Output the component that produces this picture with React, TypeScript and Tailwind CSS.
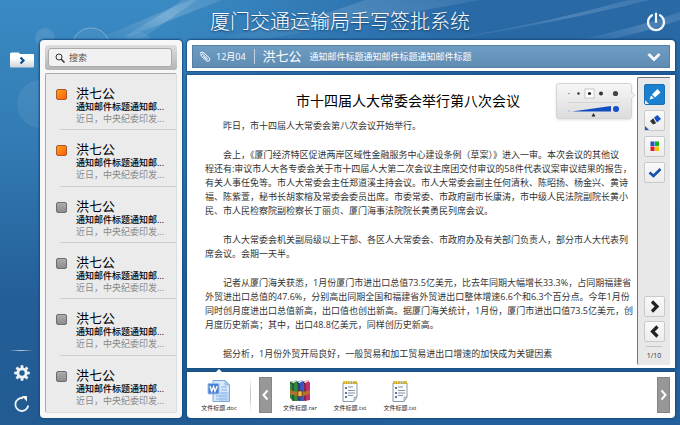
import { ReactNode } from "react";

const latin = "font-['Open_Sans','Noto_Sans_CJK_SC',sans-serif]";

const messages = [true, true, false, false, false, false];

const paragraphs: string[][] = [
  ["昨日，市十四届人大常委会第八次会议开始举行。"],
  [
    "会上，《厦门经济特区促进两岸区域性金融服务中心建设条例（草案）》进入一审。本次会议的其他议",
    "程还有:审议市人大各专委会关于市十四届人大第二次会议主席团交付审议的58件代表议案审议结果的报告，",
    "有关人事任免等。市人大常委会主任郑道溪主持会议。市人大常委会副主任何清秋、陈昭扬、杨金兴、黄诗",
    "福、陈紫萱，秘书长胡家榕及常委会委员出席。市委常委、市政府副市长康涛，市中级人民法院副院长黄小",
    "民、市人民检察院副检察长丁丽贞、厦门海事法院院长黄勇民列席会议。",
  ],
  [
    "市人大常委会机关副局级以上干部、各区人大常委会、市政府办及有关部门负责人，部分市人大代表列",
    "席会议。会期一天半。",
  ],
  [
    "记者从厦门海关获悉，1月份厦门市进出口总值73.5亿美元，比去年同期大幅增长33.3%，占同期福建省",
    "外贸进出口总值的47.6%，分别高出同期全国和福建省外贸进出口整体增速6.6个和6.3个百分点。今年1月份",
    "同时创月度进出口总值新高，出口值也创出新高。据厦门海关统计，1月份，厦门市进出口值73.5亿美元，创",
    "月度历史新高；其中，出口48.8亿美元，同样创历史新高。",
  ],
  ["据分析，1月份外贸开局良好，一般贸易和加工贸易进出口增速的加快成为关键因素"],
];

function Backdrop() {
  return (
    <svg className="absolute inset-0 h-full w-full" viewBox="0 0 680 425" preserveAspectRatio="none" aria-hidden="true">
      <defs>
        <linearGradient id="sky" x1="0" y1="0" x2="0" y2="1">
          <stop offset="0" stopColor="#3a8ac3" />
          <stop offset="0.35" stopColor="#327ab3" />
          <stop offset="0.7" stopColor="#235e97" />
          <stop offset="1" stopColor="#215b92" />
        </linearGradient>
        <linearGradient id="dusk" x1="0" y1="0" x2="1" y2="0">
          <stop offset="0.25" stopColor="#24619f" stopOpacity="0" />
          <stop offset="0.7" stopColor="#24619f" stopOpacity="0.8" />
        </linearGradient>
        <linearGradient id="ray" x1="0" y1="1" x2="1" y2="0">
          <stop offset="0" stopColor="#fff" stopOpacity="0.02" />
          <stop offset="0.6" stopColor="#fff" stopOpacity="0.17" />
          <stop offset="1" stopColor="#fff" stopOpacity="0.1" />
        </linearGradient>
      </defs>
      <rect width="680" height="425" fill="url(#sky)" />
      <rect width="680" height="425" fill="url(#dusk)" />
      <path d="M95 40 190 0H222L120 40Z" fill="url(#ray)" />
      <path d="M118 40 165 12 182 0H197L140 40Z" fill="url(#ray)" />
      <path d="M215 40 330 12 365 0H480L260 40Z" fill="url(#ray)" opacity="0.8" />
      <path d="M450 40Q560 22 650 0H628Q540 24 475 34Z" fill="url(#ray)" />
      <path d="M575 40Q630 30 680 12V20Q640 34 605 40Z" fill="url(#ray)" />
      <circle cx="45" cy="38" r="10" fill="#fff" opacity="0.1" />
      <circle cx="91" cy="47" r="19" fill="#fff" fillOpacity="0.05" stroke="#fff" strokeOpacity="0.3" />
      <circle cx="138" cy="48" r="16" fill="#fff" opacity="0.08" />
      <circle cx="41" cy="104" r="24" fill="#fff" opacity="0.07" />
    </svg>
  );
}

function Rail() {
  return (
    <nav className="flex w-10 shrink-0 flex-col items-start pt-3 pb-[5px] pl-[9px]">
      <button aria-label="展开文件夹" className="h-4 w-[26px]">
        <svg viewBox="0 0 26 16" className="h-4 w-[26px]">
          <defs>
            <linearGradient id="folder" x1="0" y1="0" x2="0" y2="1">
              <stop offset="0.4" stopColor="#fff" />
              <stop offset="1" stopColor="#cfd3d8" />
            </linearGradient>
          </defs>
          <path d="M1 2Q1 .5 2.500 .5H9Q10.500 .5 11 2H24Q25 2 25 3V14Q25 15.500 24 15.500H2Q1 15.500 1 14Z" fill="url(#folder)" />
          <path d="M11.500 5.500 14.500 8.500 11.500 11.500" fill="none" stroke="#0d5195" strokeWidth="2.200" />
        </svg>
      </button>
      <div className="mt-auto h-px w-6 bg-gradient-to-r from-transparent via-white/70 to-transparent" />
      <button aria-label="设置" className="mt-[13px] ml-1 size-[18px]">
        <svg viewBox="-9 -9 18 18" className="size-[18px]" fill="#eef2f6">
          {[0, 45, 90, 135].map((a) => (
            <path key={a} d="M-1.300-7.800H1.300L1.800 0 1.300 7.800H-1.300L-1.800 0Z" transform={`rotate(${a})`} />
          ))}
          <circle r="5.600" />
          <circle r="2.700" fill="#225c94" />
        </svg>
      </button>
      <button aria-label="刷新" className="mt-[13px] ml-1 size-[18px]">
        <svg viewBox="0 0 18 18" className="size-[18px]">
          <path d="M15.300 10.500A6.500 6.500 0 1 1 10 3.100" fill="none" stroke="#eef2f6" strokeWidth="1.800" />
          <path d="M8.500 1H14V6.500Z" fill="#eef2f6" />
        </svg>
      </button>
    </nav>
  );
}

function Inbox() {
  return (
    <section className="flex w-[142px] shrink-0 flex-col gap-[3px] rounded-[4px] bg-[#f7f7f7] p-[5px] shadow-[0_0_2px_1px_#164b80]">
      <label className="flex h-[25px] shrink-0 items-center rounded-[3px] bg-gradient-to-b from-[#dedede] to-[#b4b4b4] p-[3px] pr-[5px]">
        <span className="flex h-[19px] min-w-0 flex-1 items-center gap-1 rounded-[3px] border border-[#aaa] bg-[#f1f1f1] pl-[6px]">
          <svg viewBox="0 0 10 10" className="size-[10px] shrink-0" fill="none" stroke="#333">
            <circle cx="4" cy="4" r="3" />
            <path d="M6.200 6.200 9.500 9.500" strokeWidth="1.500" />
          </svg>
          <input
            type="search"
            aria-label="搜索"
            placeholder="搜索"
            className="w-full min-w-0 bg-transparent text-[9px] leading-[14px] outline-none placeholder:text-[#555]"
          />
        </span>
      </label>
      <ul className="flex min-h-0 flex-1 flex-col rounded-[2px] border border-t-[#aaa] border-r-[#ddd] border-b-[#ddd] border-l-[#aaa] bg-[#ebebeb]">
        {messages.map((unread, i) => (
          <li key={i} className="flex min-h-0 flex-1 flex-col justify-between">
            <div className="flex pt-3 pl-[10px]">
              <span
                className={
                  unread
                    ? "mt-[3px] size-[11px] shrink-0 rounded-[2px] border border-[#a65a2a] bg-gradient-to-br from-[#ffa01a] to-[#ff5a0a]"
                    : "mt-[3px] size-[11px] shrink-0 rounded-[2px] border border-[#6c6c6c] bg-gradient-to-b from-[#adadad] to-[#8c8c8c]"
                }
              />
              <a href="#message" className="ml-[9px] block whitespace-nowrap text-black">
                <span className="block text-[13px] leading-[15px]">洪七公</span>
                <span className="block text-[9px] leading-3 font-medium">通知邮件标题通知邮...</span>
                <span className="block text-[9px] leading-3 text-[#888]">近日，中央纪委印发...</span>
              </a>
            </div>
            {i < 5 && <span className="ml-[14px] h-px bg-[#cdcdcd]" />}
          </li>
        ))}
      </ul>
    </section>
  );
}

function MailHeader() {
  return (
    <header className="rounded-t-[4px] bg-white p-[5px] pb-[3px] shadow-[0_0_2px_1px_#164b80]">
      <div className="flex h-[23px] items-center border border-[#557fa5] bg-gradient-to-b from-[#6f9cc2] to-[#5f8cb3] pr-[8px] pl-[6px] text-white">
        <svg viewBox="0 0 12 12" className="size-3" fill="none" stroke="#fff" strokeLinecap="round">
          <path d="M8.800 8 4.200 3.600Q3.200 2.700 2.400 3.500 1.600 4.400 2.600 5.300L7.600 10Q9.200 11.300 10.600 10 11.900 8.500 10.400 7L5.400 2.300Q3.300.500 1.500 2.200" transform="translate(-.3 -.3)" />
          <path d="M4.500 5.400 8.200 8.800" />
        </svg>
        <time className="ml-[5px] text-[9px]">12月04</time>
        <span className="mx-2 h-[15px] w-px bg-white/60" />
        <span className="text-[13px]">洪七公</span>
        <span className="ml-2 text-[9px] whitespace-nowrap">通知邮件标题通知邮件标题通知邮件标题</span>
        <button aria-label="展开" className="ml-auto">
          <svg viewBox="0 0 14 10" className="h-[10px] w-[14px]">
            <path d="M1.500 2 7 7.500 12.500 2" fill="none" stroke="#f4f4f4" strokeWidth="3" />
          </svg>
        </button>
      </div>
    </header>
  );
}

function PenPopover() {
  return (
    <div className="absolute top-2 right-[43px] h-9 w-[76px] rounded-[3px] border border-[#d4d4d4] bg-gradient-to-b from-[#f6f6f6] to-[#dcdcdc] shadow-sm">
      <svg viewBox="0 0 78 34" className="absolute top-0 left-0 h-[34px] w-[78px]">
        <path d="M74 8 78 11 74 15" fill="#efefef" stroke="#ccc" strokeWidth=".7" />
        <rect x="28" y="5" width="9" height="9" fill="#fff" stroke="#bbb" strokeWidth=".8" />
        <circle cx="12" cy="9.500" r=".6" fill="#444" />
        <circle cx="21.500" cy="9.500" r="1.200" fill="#333" />
        <circle cx="32.500" cy="9.500" r="1.600" fill="#222" />
        <circle cx="44" cy="9.500" r="2" fill="#333" />
        <circle cx="58.500" cy="9.500" r="2.600" fill="#444" />
        <path d="M11 18.500H62" stroke="#ccc" strokeWidth=".7" />
        <circle cx="12" cy="27" r=".8" fill="#8fb5e8" />
        <path d="M15 27.500 54 22V27.500Z" fill="#124ec0" />
        <circle cx="59" cy="25" r="3" fill="#1550c8" />
        <path d="M36.500 29 38.500 32.500H34.500Z" fill="#222" />
      </svg>
      <input type="range" aria-label="笔画粗细" defaultValue={45} className="absolute bottom-0 left-[10px] h-4 w-[54px] opacity-0" />
    </div>
  );
}

function ToolButton({ label, active, children }: { label: string; active?: boolean; children: ReactNode }) {
  return (
    <button
      aria-label={label}
      className={
        active
          ? "size-[21px] rounded-[2px] border border-[#1d6fb4] bg-[#1b7fd0]"
          : "size-[21px] rounded-[2px] border border-[#cacaca] bg-gradient-to-b from-[#fafafa] to-[#ececec]"
      }
    >
      <svg viewBox="0 0 19 19" className="size-[19px]">
        {children}
      </svg>
    </button>
  );
}

function Toolbar() {
  return (
    <aside className="mt-[2px] mr-[5px] mb-[3px] flex w-[33px] shrink-0 flex-col items-center justify-between rounded-l-[2px] border-t border-l border-[#777] bg-[#e8e8e8] pt-[6px] pb-1">
      <div className="flex flex-col gap-[5px]">
        <ToolButton label="画笔" active>
          <path d="M0 15 4 19H0Z" fill="#e8e8e8" />
          <path d="M7 9.500 12.500 4 15.500 7.500 10 12.500Z" fill="#fff" />
          <path d="M6 10.500 9 13.200 4.500 14.500Z" fill="#fff" />
        </ToolButton>
        <ToolButton label="橡皮">
          <path d="M0 15 4 19H0Z" fill="#1255c4" />
          <path d="M9 6.500 12.500 4 16 8 12 11.500Z" fill="#1550c4" />
          <path d="M8.300 7.300 11.200 12.200 8 13.500 5 10Z" fill="#333" />
        </ToolButton>
        <ToolButton label="颜色">
          <rect x="5.500" y="4.500" width="4" height="4.500" fill="#1b56c8" />
          <rect x="10" y="4.500" width="4" height="4.500" fill="#18b018" />
          <rect x="5.500" y="9.500" width="4" height="4.500" fill="#e02020" />
          <rect x="10" y="9.500" width="4" height="4.500" fill="#f5c400" />
        </ToolButton>
        <ToolButton label="确认">
          <path d="M4.500 9.500 8.500 13 15.500 6" fill="none" stroke="#1552ac" strokeWidth="2.600" />
        </ToolButton>
      </div>
      <div className="flex flex-col items-center gap-1">
        <ToolButton label="下一页">
          <path d="M7 4.500 12 9.500 7 14.500" fill="none" stroke="#222" strokeWidth="3.200" />
        </ToolButton>
        <ToolButton label="上一页">
          <path d="M12.500 4.500 7.500 9.500 12.500 14.500" fill="none" stroke="#222" strokeWidth="3.200" />
        </ToolButton>
        <div className="h-px w-4 bg-[#c4c4c4]" />
        <span className="text-[7px] leading-[10px] text-[#333]">1/10</span>
      </div>
    </aside>
  );
}

function Article() {
  return (
    <div className="relative flex min-h-0 flex-1 bg-white shadow-[0_0_2px_1px_#164b80]">
      <article className="flex min-w-0 flex-1 flex-col gap-[15px] pt-4 pl-[18px] text-[9px] leading-[14px] whitespace-nowrap text-[#333]">
        <h2 className="-mb-[7px] pr-[26px] text-center text-[14px] leading-5 text-black">市十四届人大常委会举行第八次会议</h2>
        {paragraphs.map((lines) => (
          <p key={lines[0]} className="indent-[18px]">
            {lines.map((line, i) => (
              <span key={line}>
                {i > 0 && <br />}
                {line}
              </span>
            ))}
          </p>
        ))}
      </article>
      <Toolbar />
      <PenPopover />
    </div>
  );
}

function WordIcon() {
  return (
    <svg viewBox="0 0 24 24" className="size-6">
      <path d="M6 1.500H18L22.500 6V22.500H6Z" fill="#d7e8fa" stroke="#7da8d8" />
      <path d="M18 1.500V6H22.500Z" fill="#a9c8ec" stroke="#7da8d8" strokeWidth=".6" />
      <path d="M14 8H20M14 11H20M14 14H20M9 17H20M9 20H20" stroke="#86afe0" />
      <path d="M12 13H22V22H12Z" fill="#9cc2f0" opacity=".5" />
      <rect x="1" y="4.500" width="11" height="10.500" rx="1" fill="#4a7fd6" stroke="#9dbfec" />
      <path d="M3 7 4.700 12.300 6.600 7.800 8 12.300 10.300 7" fill="none" stroke="#fff" strokeWidth="1.400" />
    </svg>
  );
}

function RarIcon() {
  return (
    <svg viewBox="0 0 24 24" className="size-6">
      <path d="M2 3 8 1 10 3V22L5 22 2 19Z" fill="#2f8a3e" />
      <path d="M9 3 14 1 16 3V22H11L9 20Z" fill="#3b55b8" />
      <path d="M15 3 20 1 22 4V21L17 22 15 20Z" fill="#c0306e" />
      <path d="M2 3 5 5V22M9 3 11 5V22M15 3 17 5V22" fill="none" stroke="#222" strokeWidth=".9" />
      <path d="M3 3 8 1 9 2 5 4ZM10 3 14 1 15 2 11 4ZM16 3 20 1 21 2 17 4Z" fill="#eee" />
      <path d="M2 11Q12 15 22 11V15Q12 19 2 15Z" fill="#b5702c" />
      <rect x="10" y="12" width="4" height="5.500" fill="#e8c050" stroke="#6b4215" strokeWidth=".8" />
    </svg>
  );
}

function TextIcon() {
  return (
    <svg viewBox="0 0 24 24" className="size-6">
      <path d="M5 4H19V18L16 22.500H5Z" fill="#f8fafc" stroke="#8b98a8" />
      <path d="M19 18H16V22.500Z" fill="#c9d2dc" stroke="#8b98a8" strokeWidth=".6" />
      <path d="M6 2V5M8.500 2V5M11 2V5M13.500 2V5M16 2V5M18 2V5" stroke="#d4a80c" strokeWidth="1.500" />
      <path d="M7 9H9M7 14H9M7 18H9" stroke="#5c7894" strokeWidth="2" />
      <path d="M10 8H15M10 11.500H17M10 14H17M10 16.500H15" stroke="#8593a3" />
    </svg>
  );
}

function FileLink({ name, children }: { name: string; children: ReactNode }) {
  return (
    <a href="#file" className="flex w-[50px] shrink-0 flex-col items-center text-[6px] leading-[8px] whitespace-nowrap text-[#222]">
      {children}
      <span className="mt-px">{name}</span>
    </a>
  );
}

function PagerButton({ label, d }: { label: string; d: string }) {
  return (
    <button aria-label={label} className="flex h-9 w-[13px] shrink-0 items-center justify-center border border-[#858585] bg-[#979797]">
      <svg viewBox="0 0 9 12" className="h-3 w-[9px]">
        <path d={d} fill="none" stroke="#fff" strokeWidth="2" />
      </svg>
    </button>
  );
}

function Attachments() {
  return (
    <footer className="relative flex h-[46px] shrink-0 items-center rounded-b-[4px] bg-white pr-[5px] pl-[7px] shadow-[0_0_2px_1px_#164b80]">
      <svg viewBox="0 0 8 4" className="absolute -top-[3px] left-7 h-1 w-2">
        <path d="M0 4 4 0 8 4Z" fill="#fff" />
      </svg>
      <FileLink name="文件标题.doc">
        <WordIcon />
      </FileLink>
      <span className="mr-2 ml-[6px] h-9 w-px bg-gradient-to-b from-transparent via-[#bbb] to-transparent" />
      <PagerButton label="上一组附件" d="M6.500 1.500 2.500 6 6.500 10.500" />
      <div className="ml-[3px] flex flex-1">
        <FileLink name="文件标题.rar">
          <RarIcon />
        </FileLink>
        <FileLink name="文件标题.txt">
          <TextIcon />
        </FileLink>
        <FileLink name="文件标题.txt">
          <TextIcon />
        </FileLink>
      </div>
      <PagerButton label="下一组附件" d="M2.500 1.500 6.500 6 2.500 10.500" />
    </footer>
  );
}

export default function App() {
  return (
    <div className={`relative flex h-screen flex-col overflow-hidden bg-[#235e97] ${latin}`}>
      <Backdrop />
      <div className="relative flex h-10 shrink-0 items-center justify-center">
        <h1 className="pt-[3px] text-[20px] leading-6 font-light text-white [text-shadow:0_1px_2px_#12406f]">厦门交通运输局手写签批系统</h1>
        <button aria-label="退出" className="absolute top-3 right-[14px] size-5">
          <svg viewBox="0 0 20 20" className="size-5" fill="none" stroke="#f2f5f8" strokeWidth="2.200" strokeLinecap="round">
            <path d="M10 1.500V10" />
            <path d="M6 3.200A8 8 0 1 0 14 3.200" />
          </svg>
        </button>
      </div>
      <div className="relative flex min-h-0 flex-1 pr-[5px] pb-[7px]">
        <Rail />
        <Inbox />
        <main className="ml-[5px] flex min-w-0 flex-1 flex-col gap-1">
          <MailHeader />
          <Article />
          <Attachments />
        </main>
      </div>
    </div>
  );
}
